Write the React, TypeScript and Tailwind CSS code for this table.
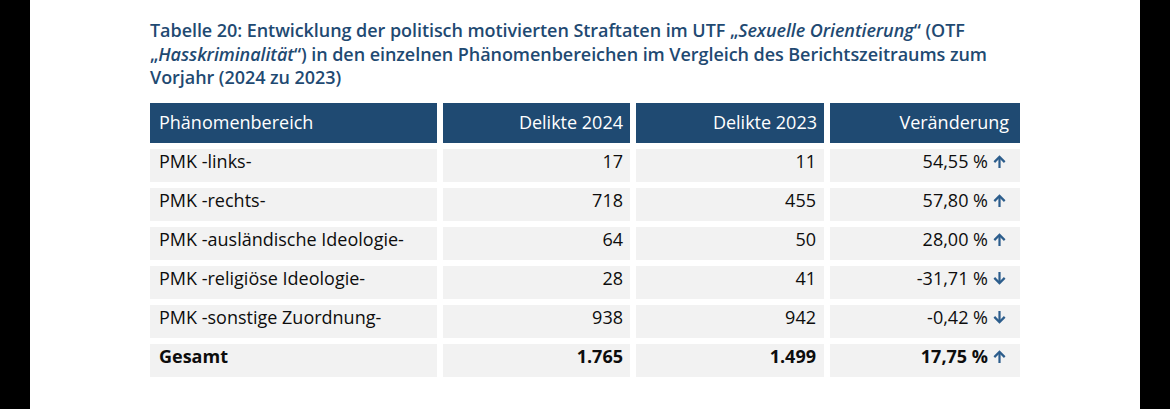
import React from "react";

const rows = [
  { name: "PMK -links-", a: "17", b: "11", c: "54,55 %", up: true },
  { name: "PMK -rechts-", a: "718", b: "455", c: "57,80 %", up: true },
  { name: "PMK -ausländische Ideologie-", a: "64", b: "50", c: "28,00 %", up: true },
  { name: "PMK -religiöse Ideologie-", a: "28", b: "41", c: "-31,71 %", up: false },
  { name: "PMK -sonstige Zuordnung-", a: "938", b: "942", c: "-0,42 %", up: false },
];

function Arrow({ up }: { up: boolean }) {
  return (
    <svg width="13" height="13" viewBox="0 0 13 13" className="ml-[5px] shrink-0">
      {up ? (
        <g stroke="#2c5d8c" strokeWidth="2.2" fill="none" strokeLinecap="butt" strokeLinejoin="miter">
          <path d="M6.5 13V2" />
          <path d="M1.3 7.1L6.5 1.9l5.2 5.2" />
        </g>
      ) : (
        <g stroke="#2c5d8c" strokeWidth="2.2" fill="none" strokeLinecap="butt" strokeLinejoin="miter">
          <path d="M6.5 0v11" />
          <path d="M1.3 5.9l5.2 5.2 5.2-5.2" />
        </g>
      )}
    </svg>
  );
}

export default function App() {
  const cell = "bg-[#f2f2f2] h-[33px] leading-[20px] pt-[2px] text-[18px] text-[#0d0d0d]";
  return (
    <div
      className="w-[1170px] h-[409px] bg-black flex"
      style={{ fontFamily: '"Open Sans", "Noto Sans", sans-serif' }}
    >
      <div className="ml-[30px] w-[1110px] h-full bg-white pl-[120px] pt-[19px]">
        <h1 className="text-[18px] leading-[23.5px] font-semibold text-[#1f4a72] tracking-[-0.06px] whitespace-nowrap">
          Tabelle 20: Entwicklung der politisch motivierten Straftaten im UTF „<i>Sexuelle Orientierung</i>“ (OTF
          <br />„<i>Hasskriminalität</i>“) in den einzelnen Phänomenbereichen im Vergleich des Berichtszeitraums zum
          <br />Vorjahr (2024 zu 2023)
        </h1>
        <div className="mt-[13px] grid grid-cols-[287px_187px_188px_190px] gap-[6px]">
          <div className="bg-[#1f4a72] h-[40px] flex items-center pl-[9px] text-white text-[18px]">Phänomenbereich</div>
          <div className="bg-[#1f4a72] h-[40px] flex items-center justify-end pr-[7px] text-white text-[18px]">Delikte 2024</div>
          <div className="bg-[#1f4a72] h-[40px] flex items-center justify-end pr-[7px] text-white text-[18px]">Delikte 2023</div>
          <div className="bg-[#1f4a72] h-[40px] flex items-center justify-end pr-[11px] text-white text-[18px]">Veränderung</div>
          {rows.map((r) => (
            <React.Fragment key={r.name}>
              <div className={`${cell} pl-[9px]`}>{r.name}</div>
              <div className={`${cell} pr-[7px] text-right`}>{r.a}</div>
              <div className={`${cell} pr-[8px] text-right`}>{r.b}</div>
              <div className={`${cell} pr-[14px] flex items-start justify-end`}>
                <span>{r.c}</span>
                <span className="h-[20px] flex items-center pt-[1px]"><Arrow up={r.up} /></span>
              </div>
            </React.Fragment>
          ))}
          <div className={`${cell} pl-[9px] font-bold`}>Gesamt</div>
          <div className={`${cell} pr-[7px] text-right font-bold`}>1.765</div>
          <div className={`${cell} pr-[8px] text-right font-bold`}>1.499</div>
          <div className={`${cell} pr-[14px] flex items-start justify-end font-bold`}>
            <span>17,75 %</span>
            <span className="h-[20px] flex items-center pt-[1px]"><Arrow up={true} /></span>
          </div>
        </div>
      </div>
    </div>
  );
}
